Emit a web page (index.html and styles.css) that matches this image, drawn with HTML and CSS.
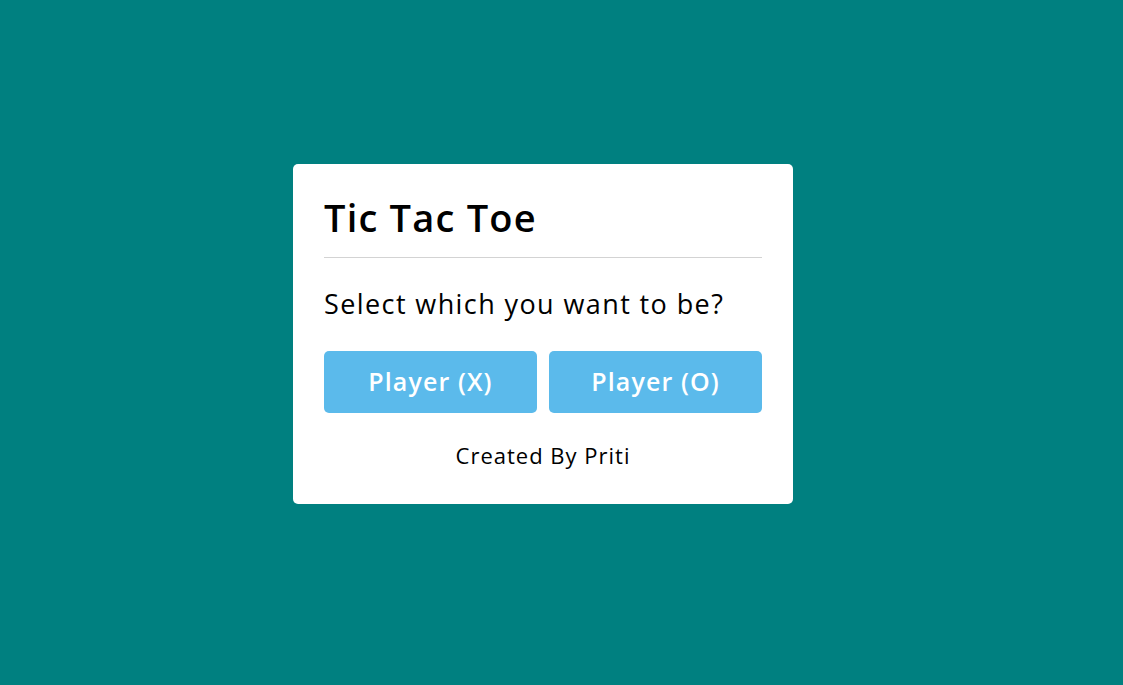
FILE: index.html
```html
<!DOCTYPE html>
<html lang="en">
<head>
<meta charset="utf-8">
<title>Tic Tac Toe</title>
<link rel="stylesheet" href="styles.css">
</head>
<body>
<main class="stage">
  <section class="select-box">
    <header class="box-header">Tic Tac Toe</header>
    <div class="box-title">Select which you want to be?</div>
    <div class="options">
      <button class="opt-btn">Player (X)</button>
      <button class="opt-btn">Player (O)</button>
    </div>
    <div class="credit">Created By Priti</div>
  </section>
</main>
</body>
</html>
```

FILE: styles.css
```css
* {
  margin: 0;
  padding: 0;
  box-sizing: border-box;
}
html, body {
  height: 100%;
}
body {
  background: #008080;
  font-family: "Open Sans", "Noto Sans", sans-serif;
  color: #000;
}
.stage {
  height: 100%;
  display: flex;
  align-items: center;
  justify-content: center;
  padding: 0 37px 17px 0;
}
.select-box {
  width: 500px;
  background: #fff;
  border-radius: 5px;
  padding: 25px 31px 32px;
}
.box-header {
  font-size: 38px;
  font-weight: 600;
  letter-spacing: 1.2px;
  line-height: 56px;
  padding-bottom: 12px;
  border-bottom: 1px solid #d3d3d3;
}
.box-title {
  font-size: 27px;
  font-weight: 400;
  letter-spacing: 1.4px;
  line-height: 41px;
  margin: 25px 0 27px;
}
.options {
  display: flex;
  gap: 12px;
}
.opt-btn {
  flex: 1;
  height: 62px;
  padding-bottom: 3px;
  border: none;
  border-radius: 5px;
  background: #5bbaeb;
  color: #fff;
  font-family: inherit;
  font-size: 25px;
  font-weight: 600;
  letter-spacing: 1.1px;
}
.credit {
  text-align: center;
  margin-top: 25px;
  font-size: 22px;
  font-weight: 400;
  letter-spacing: 1px;
  line-height: 34px;
}
```
